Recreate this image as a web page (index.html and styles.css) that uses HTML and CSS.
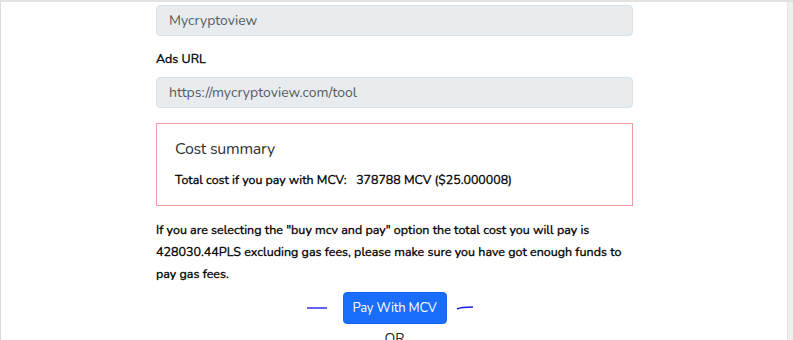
FILE: index.html
```html
<!DOCTYPE html>
<html lang="en">
  <head>
    <meta charset="UTF-8" />
    <meta content="width=device-width, initial-scale=1.0" name="viewport" />
    <link rel="stylesheet" href="styles.css">
  </head>
  <body>
    <div class="page">
      <div class="form">
        <input class="field" type="text" value="Mycryptoview" readonly />

        <label class="label">Ads URL</label>
        <input class="field" type="text" value="https://mycryptoview.com/tool" readonly />

        <div class="summary">
          <h4>Cost summary</h4>
          <p>Total cost if you pay with MCV:&nbsp;&nbsp; 378788 MCV ($25.000008)</p>
        </div>

        <p class="note">
          If you are selecting the "buy mcv and pay" option the total cost you will pay is<br>
          428030.44PLS excluding gas fees, please make sure you have got enough funds to<br>
          pay gas fees.
        </p>

        <div class="pay-row">
          <svg class="dash dash-left" width="22" height="6" viewBox="0 0 22 6"><path d="M1 3 L21 3" /></svg>
          <button class="btn">Pay With MCV</button>
          <svg class="dash dash-right" width="18" height="6" viewBox="0 0 18 6"><path d="M1 4 C5 2 10 2 17 2" /></svg>
        </div>
        <div class="or">OR</div>
      </div>
      <div class="scrollbar"></div>
    </div>
  </body>
</html>
```

FILE: styles.css
```css
html, body {
  margin: 0;
  height: 100%;
  overflow: hidden;
}
body {
  font-family: "Nunito", "Lato", "Open Sans", sans-serif;
  color: #212529;
  background: #fff;
}
.page {
  display: flex;
  height: 340px;
  border-top: 2px solid #e2e2e2;
  border-left: 1px solid #dcdcdc;
  box-sizing: border-box;
  overflow: hidden;
}
.form {
  width: 477px;
  padding: 3px 0 0 155px;
  margin-right: auto;
}
.scrollbar {
  width: 5px;
  background: #efefef;
  border-left: 1px solid #e6e6e6;
}
.field {
  display: block;
  box-sizing: border-box;
  width: 477px;
  height: 31px;
  padding: 0 12px;
  font-family: inherit;
  font-size: 14px;
  color: #555b61;
  background: #e9ecef;
  border: 1px solid #dee2e6;
  border-radius: 4px;
  outline: none;
}
.label {
  display: block;
  margin: 14px 0 10px;
  height: 17px;
  line-height: 17px;
  font-size: 12.5px;
  color: #000;
  -webkit-text-stroke: 0.3px #000;
}
.summary {
  box-sizing: border-box;
  width: 477px;
  margin-top: 15px;
  padding: 15px 18px 17px;
  border: 1px solid #f09c9c;
}
.summary h4 {
  margin: 0 0 13px;
  height: 20px;
  line-height: 20px;
  font-size: 16px;
  font-weight: 400;
  letter-spacing: -0.3px;
  color: #333;
}
.summary p {
  margin: 0;
  height: 16px;
  line-height: 16px;
  font-size: 12.4px;
  color: #000;
  -webkit-text-stroke: 0.3px #000;
}
.note {
  margin: 13px 0 0;
  font-size: 12.5px;
  line-height: 22px;
  white-space: nowrap;
  color: #000;
  -webkit-text-stroke: 0.3px #000;
}
.pay-row {
  display: flex;
  justify-content: center;
  align-items: center;
  margin-top: 7px;
  padding-right: 10px;
}
.dash path {
  fill: none;
  stroke: #1d23e6;
  stroke-width: 1.4;
}
.dash-left {
  margin-right: 15px;
}
.dash-right {
  margin-left: 9px;
}
.btn {
  height: 32px;
  padding: 0 9px;
  font-family: inherit;
  font-size: 13px;
  letter-spacing: -0.2px;
  color: #fff;
  background: #1a6dfb;
  border: 1px solid #1664ef;
  border-radius: 4px;
}
.or {
  margin-top: 7px;
  line-height: 16px;
  text-align: center;
  font-size: 14px;
  color: #222;
}
```
